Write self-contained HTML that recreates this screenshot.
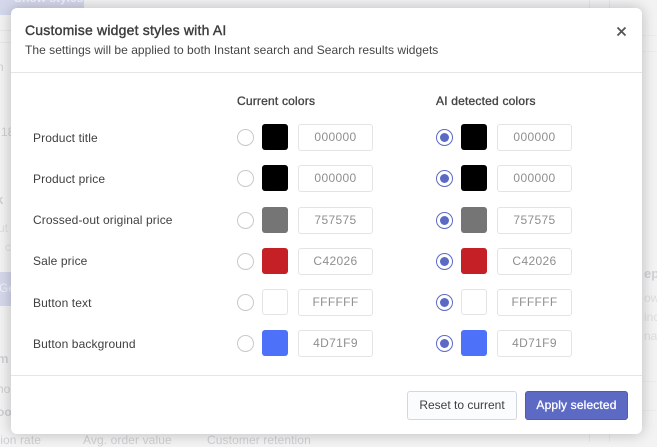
<!DOCTYPE html>
<html>
<head>
<meta charset="utf-8">
<style>
html,body{margin:0;padding:0}
body{width:657px;height:442px;position:relative;overflow:hidden;background:#f3f3f4;font-family:"Liberation Sans",sans-serif;color:#3a3a3a}
.a{position:absolute;white-space:nowrap}
.bg{color:#cfcfd2;font-size:12px}
.modal{position:absolute;left:11px;top:8px;width:631px;height:426px;background:#fff;border-radius:6px;box-shadow:0 0 14px rgba(0,0,0,.24)}
.lbl{left:33px;font-size:12px;letter-spacing:.11px;color:#3f3f3f;line-height:16px}
.head{font-size:12px;color:#444;line-height:16px;letter-spacing:.2px;-webkit-text-stroke:.35px #444}
.r{position:absolute;width:15px;height:15px;border:1px solid #c9c9c9;border-radius:50%;background:#fff}
.r.on{border-color:#5c6ac4}
.r.on:after{content:"";position:absolute;left:3px;top:3px;width:9px;height:9px;border-radius:50%;background:#5c6ac4}
.s{position:absolute;width:26px;height:26px;border-radius:3px}
.i{position:absolute;width:73px;height:25px;border:1px solid #e3e4e5;border-radius:3px;background:#fff;text-align:center;line-height:25px;font-size:12px;color:#8f8f8f;letter-spacing:.35px}
</style>
</head>
<body>
<div class="a" style="left:0;top:0;width:84px;height:15px;background:#d5d8ec"></div>
<div class="a" style="left:14px;top:-9px;font-size:12px;font-weight:bold;color:#f1f2f9">Show styles</div>
<div class="a" style="left:0;top:30px;width:11px;height:1px;background:#e8e8e9"></div>
<div class="a" style="left:0;top:42px;width:11px;height:1px;background:#e8e8e9"></div>
<div class="a bg" style="left:-3px;top:60px;">n</div>
<div class="a bg" style="left:1px;top:125px;">18</div>
<div class="a" style="left:-4px;top:192px;font-size:13px;font-weight:bold;color:#d2d2d4">k</div>
<div class="a bg" style="left:-2px;top:221px;color:#dedee0;">ut</div>
<div class="a bg" style="left:5px;top:240px;color:#dedee0;">c</div>
<div class="a" style="left:0;top:272px;width:11px;height:34px;background:#d5d8ec"></div>
<div class="a" style="left:-1px;top:281px;font-size:12px;color:#f1f2f9">Ge</div>
<div class="a" style="left:-3px;top:351px;font-size:13px;font-weight:bold;color:#d2d2d4">m</div>
<div class="a bg" style="left:-3px;top:382px;">ho</div>
<div class="a" style="left:-3px;top:405px;font-size:12px;font-weight:bold;color:#cfcfd2">oo</div>
<div class="a bg" style="left:-10px;top:433px;letter-spacing:.1px">rsion rate</div>
<div class="a bg" style="left:83px;top:433px;letter-spacing:.1px">Avg. order value</div>
<div class="a bg" style="left:207px;top:433px;letter-spacing:.1px">Customer retention</div>
<div class="a" style="left:642px;top:35px;width:15px;height:1px;background:#ececed"></div>
<div class="a" style="left:642px;top:51px;width:15px;height:1px;background:#ececed"></div>
<div class="a" style="left:589px;top:0;width:1px;height:8px;background:#e8e8e9"></div>
<div class="a" style="left:609px;top:0;width:1px;height:8px;background:#e8e8e9"></div>
<div class="a" style="left:589px;top:434px;width:1px;height:8px;background:#e8e8e9"></div>
<div class="a" style="left:609px;top:434px;width:1px;height:8px;background:#e8e8e9"></div>
<div class="a" style="left:642px;top:381px;width:15px;height:1px;background:#ececed"></div>
<div class="a" style="left:642px;top:410px;width:15px;height:1px;background:#ececed"></div>
<div class="a" style="left:644px;top:266px;font-size:13px;font-weight:bold;color:#d2d2d4">epa</div>
<div class="a bg" style="left:644px;top:291px;color:#dedee0;">ow</div>
<div class="a bg" style="left:644px;top:310px;color:#dedee0;">inc</div>
<div class="a bg" style="left:644px;top:329px;color:#dedee0;">nat</div>

<div class="modal"></div>
<div class="a" style="left:25px;top:21px;font-size:14px;line-height:18px;color:#3d3d3d;letter-spacing:.2px;-webkit-text-stroke:.4px #3d3d3d">Customise widget styles with AI</div>
<div class="a" style="left:25px;top:42px;font-size:12px;line-height:16px;color:#454545;letter-spacing:.04px">The settings will be applied to both Instant search and Search results widgets</div>
<svg class="a" style="left:616px;top:26px" width="12" height="12" viewBox="0 0 12 12"><path d="M1.5 1.5L9.5 9.5M9.5 1.5L1.5 9.5" stroke="#555" stroke-width="1.8" fill="none"/></svg>
<div class="a" style="left:11px;top:72px;width:631px;height:1px;background:#e4e5e7"></div>
<div class="a" style="left:11px;top:375px;width:631px;height:1px;background:#e4e5e7"></div>

<div class="a head" style="left:237px;top:93px">Current colors</div>
<div class="a head" style="left:436px;top:93px">AI detected colors</div>

<div class="a lbl" style="top:130px">Product title</div>
<div class="r" style="left:237px;top:129px"></div>
<div class="s" style="left:262px;top:124px;background:#000"></div>
<div class="i" style="left:298px;top:124px">000000</div>
<div class="r on" style="left:436px;top:129px"></div>
<div class="s" style="left:461px;top:124px;background:#000"></div>
<div class="i" style="left:497px;top:124px">000000</div>

<div class="a lbl" style="top:171px">Product price</div>
<div class="r" style="left:237px;top:170px"></div>
<div class="s" style="left:262px;top:165px;background:#000"></div>
<div class="i" style="left:298px;top:165px">000000</div>
<div class="r on" style="left:436px;top:170px"></div>
<div class="s" style="left:461px;top:165px;background:#000"></div>
<div class="i" style="left:497px;top:165px">000000</div>

<div class="a lbl" style="top:212px">Crossed-out original price</div>
<div class="r" style="left:237px;top:212px"></div>
<div class="s" style="left:262px;top:207px;background:#757575"></div>
<div class="i" style="left:298px;top:207px">757575</div>
<div class="r on" style="left:436px;top:212px"></div>
<div class="s" style="left:461px;top:207px;background:#757575"></div>
<div class="i" style="left:497px;top:207px">757575</div>

<div class="a lbl" style="top:253px">Sale price</div>
<div class="r" style="left:237px;top:253px"></div>
<div class="s" style="left:262px;top:248px;background:#c42026"></div>
<div class="i" style="left:298px;top:248px">C42026</div>
<div class="r on" style="left:436px;top:253px"></div>
<div class="s" style="left:461px;top:248px;background:#c42026"></div>
<div class="i" style="left:497px;top:248px">C42026</div>

<div class="a lbl" style="top:295px">Button text</div>
<div class="r" style="left:237px;top:294px"></div>
<div class="s" style="left:262px;top:289px;width:24px;height:24px;border:1px solid #e4e4e5;background:#fff"></div>
<div class="i" style="left:298px;top:289px">FFFFFF</div>
<div class="r on" style="left:436px;top:294px"></div>
<div class="s" style="left:461px;top:289px;width:24px;height:24px;border:1px solid #e4e4e5;background:#fff"></div>
<div class="i" style="left:497px;top:289px">FFFFFF</div>

<div class="a lbl" style="top:336px">Button background</div>
<div class="r" style="left:237px;top:335px"></div>
<div class="s" style="left:262px;top:330px;background:#4d71f9"></div>
<div class="i" style="left:298px;top:330px">4D71F9</div>
<div class="r on" style="left:436px;top:335px"></div>
<div class="s" style="left:461px;top:330px;background:#4d71f9"></div>
<div class="i" style="left:497px;top:330px">4D71F9</div>

<div class="a" style="left:407px;top:391px;width:108px;height:27px;border:1px solid #d3d7de;border-radius:3px;background:#fbfcfd;text-align:center;line-height:27px;font-size:12px;color:#3f3f3f;letter-spacing:0">Reset to current</div>
<div class="a" style="left:525px;top:391px;width:101px;height:27px;border:1px solid #4f5cb0;border-radius:3px;background:#5c6ac4;text-align:center;line-height:27px;font-size:12px;color:#fff;letter-spacing:.15px;-webkit-text-stroke:.3px #fff">Apply selected</div>
</body>
</html>
